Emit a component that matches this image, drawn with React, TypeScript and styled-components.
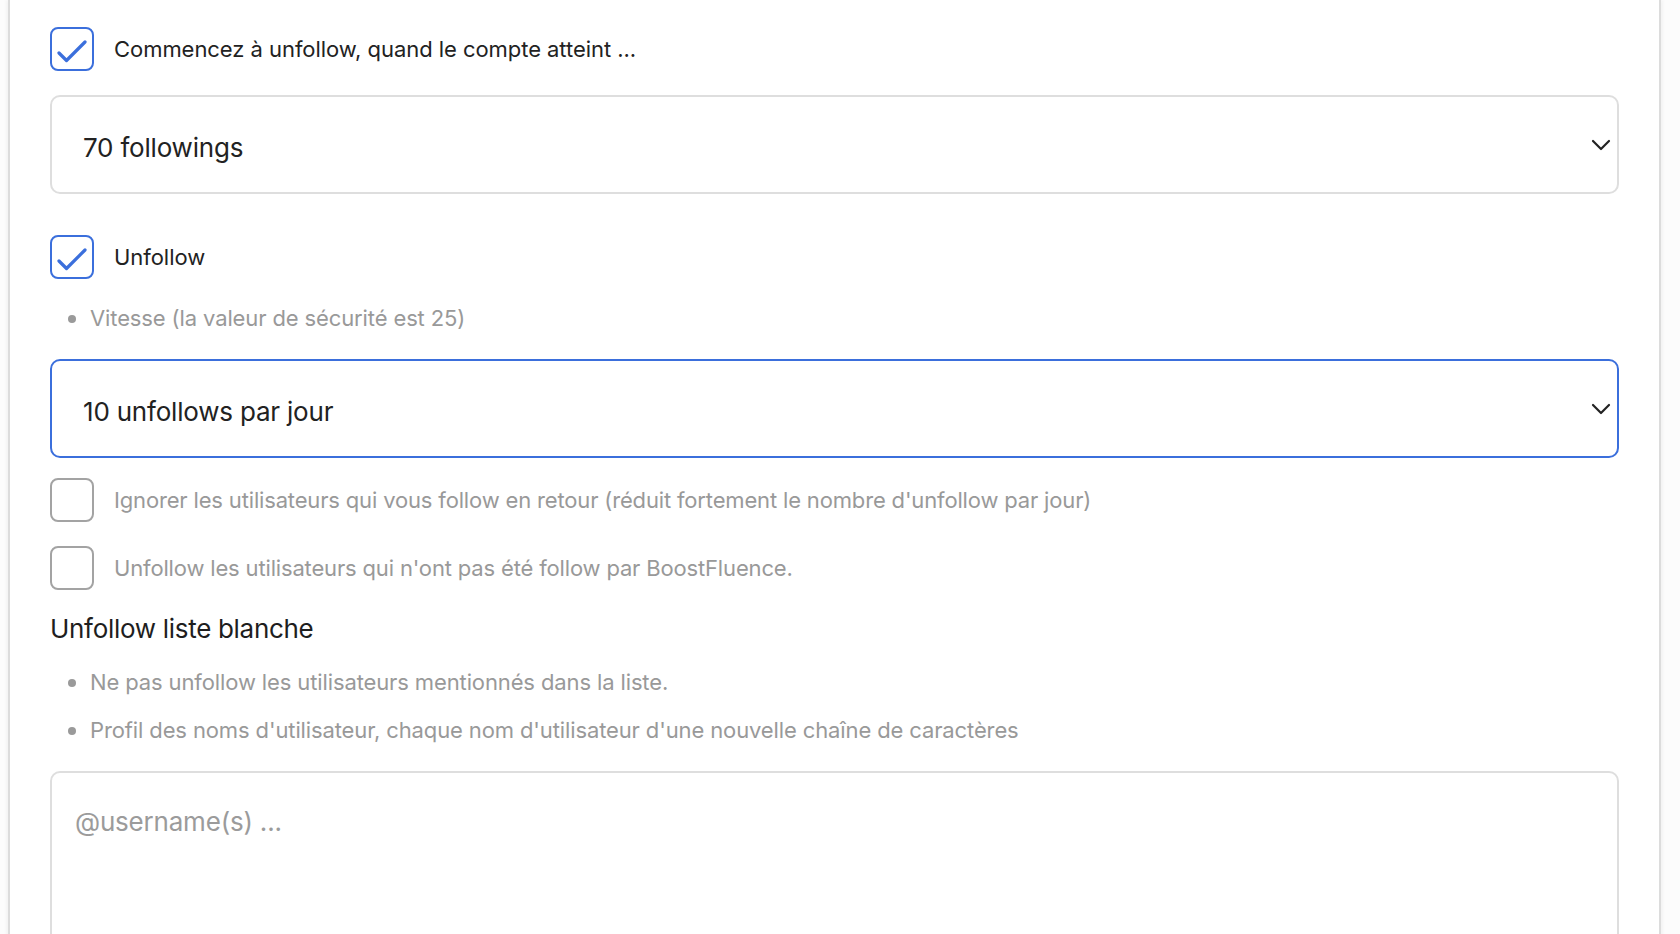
import React from "react";
import styled, { createGlobalStyle } from "styled-components";

const Global = createGlobalStyle`
  html, body { margin: 0; padding: 0; background: #ffffff; }
  body { font-family: Inter, "Noto Sans", "Liberation Sans", sans-serif; color: #222; overflow: hidden; }
  * { box-sizing: border-box; }
`;

const Page = styled.div`
  height: 934px;
  padding: 0 19px 0 8px;
  background: #fcfcfc;
  overflow: hidden;
`;

const Panel = styled.div`
  min-height: 100%;
  background: #fff;
  border-left: 2px solid #dcdcdc;
  border-right: 2px solid #dcdcdc;
  box-shadow: -2px 0 3px rgba(0,0,0,0.04), 2px 0 3px rgba(0,0,0,0.04);
  padding: 27px 40px 0 40px;
  display: flex;
  flex-direction: column;
  & > * { flex-shrink: 0; }
`;

const CheckRow = styled.label<{ $mt?: number }>`
  display: flex;
  align-items: center;
  gap: 20px;
  margin-top: ${(p) => p.$mt ?? 0}px;
  font-size: 22px;
  letter-spacing: -0.05px;
  color: #222;
`;

const Box = styled.span<{ $checked?: boolean }>`
  width: 44px;
  height: 44px;
  flex: none;
  border-radius: 8px;
  border: 2px solid ${(p) => (p.$checked ? "#3b6fdc" : "#a3a3a3")};
  display: flex;
  align-items: center;
  justify-content: center;
  background: #fff;
`;

const LabelText = styled.span<{ $muted?: boolean }>`
  color: ${(p) => (p.$muted ? "#999999" : "#222222")};
  letter-spacing: ${(p) => (p.$muted ? "-0.16px" : "-0.05px")};
`;

const Select = styled.div<{ $focused?: boolean; $mt: number }>`
  margin-top: ${(p) => p.$mt}px;
  height: 99px;
  border: 2px solid ${(p) => (p.$focused ? "#3b6fdc" : "#dedede")};
  border-radius: 10px;
  display: flex;
  align-items: center;
  justify-content: space-between;
  padding: 6px 6px 0 31px;
  font-size: 26px;
  letter-spacing: -0.2px;
  color: #222;
`;

const Chevron = styled.svg`
  width: 20px;
  height: 12px;
  margin-top: -5px;
`;

const Hints = styled.ul<{ $mt: number }>`
  margin: ${(p) => p.$mt}px 0 0 0;
  padding: 0 0 0 40px;
  list-style: disc;
  color: #999;
  font-size: 22px;
  letter-spacing: -0.12px;
  li { line-height: 47px; padding-left: 0; }
  li::marker { color: #9a9a9a; font-size: 24px; }
`;

const Heading = styled.h3`
  margin: 23px 0 0 0;
  font-weight: 400;
  font-size: 26px;
  letter-spacing: -0.3px;
  color: #1e1e1e;
`;

const TextArea = styled.textarea`
  margin-top: 17px;
  height: 220px;
  width: 100%;
  resize: none;
  border: 2px solid #dedede;
  border-radius: 10px;
  padding: 33px 23px;
  font-family: inherit;
  font-size: 26px;
  letter-spacing: -0.2px;
  color: #222;
  outline: none;
  &::placeholder { color: #9b9b9b; }
`;

const Check = () => (
  <svg width="30" height="24" viewBox="0 0 30 24" style={{ marginTop: 4 }}>
    <path d="M2 14 L9.5 21.5 L28 3" fill="none" stroke="#3b6fdc" strokeWidth="3.2" strokeLinecap="round" strokeLinejoin="round" />
  </svg>
);

const Down = () => (
  <Chevron viewBox="0 0 20 12">
    <path d="M2 2 L10 10 L18 2" fill="none" stroke="#222" strokeWidth="2.2" strokeLinecap="round" strokeLinejoin="round" />
  </Chevron>
);

export default function App() {
  return (
    <>
      <Global />
      <Page>
        <Panel>
          <CheckRow>
            <Box $checked><Check /></Box>
            <LabelText>Commencez à unfollow, quand le compte atteint ...</LabelText>
          </CheckRow>
          <Select $mt={24}>
            <span>70 followings</span>
            <Down />
          </Select>
          <CheckRow $mt={41}>
            <Box $checked><Check /></Box>
            <LabelText>Unfollow</LabelText>
          </CheckRow>
          <Hints $mt={15}>
            <li>Vitesse (la valeur de sécurité est 25)</li>
          </Hints>
          <Select $mt={17} $focused>
            <span>10 unfollows par jour</span>
            <Down />
          </Select>
          <CheckRow $mt={20}>
            <Box />
            <LabelText $muted>Ignorer les utilisateurs qui vous follow en retour (réduit fortement le nombre d'unfollow par jour)</LabelText>
          </CheckRow>
          <CheckRow $mt={24}>
            <Box />
            <LabelText $muted>Unfollow les utilisateurs qui n'ont pas été follow par BoostFluence.</LabelText>
          </CheckRow>
          <Heading>Unfollow liste blanche</Heading>
          <Hints $mt={14}>
            <li>Ne pas unfollow les utilisateurs mentionnés dans la liste.</li>
            <li>Profil des noms d'utilisateur, chaque nom d'utilisateur d'une nouvelle chaîne de caractères</li>
          </Hints>
          <TextArea placeholder="@username(s) ..." />
        </Panel>
      </Page>
    </>
  );
}
